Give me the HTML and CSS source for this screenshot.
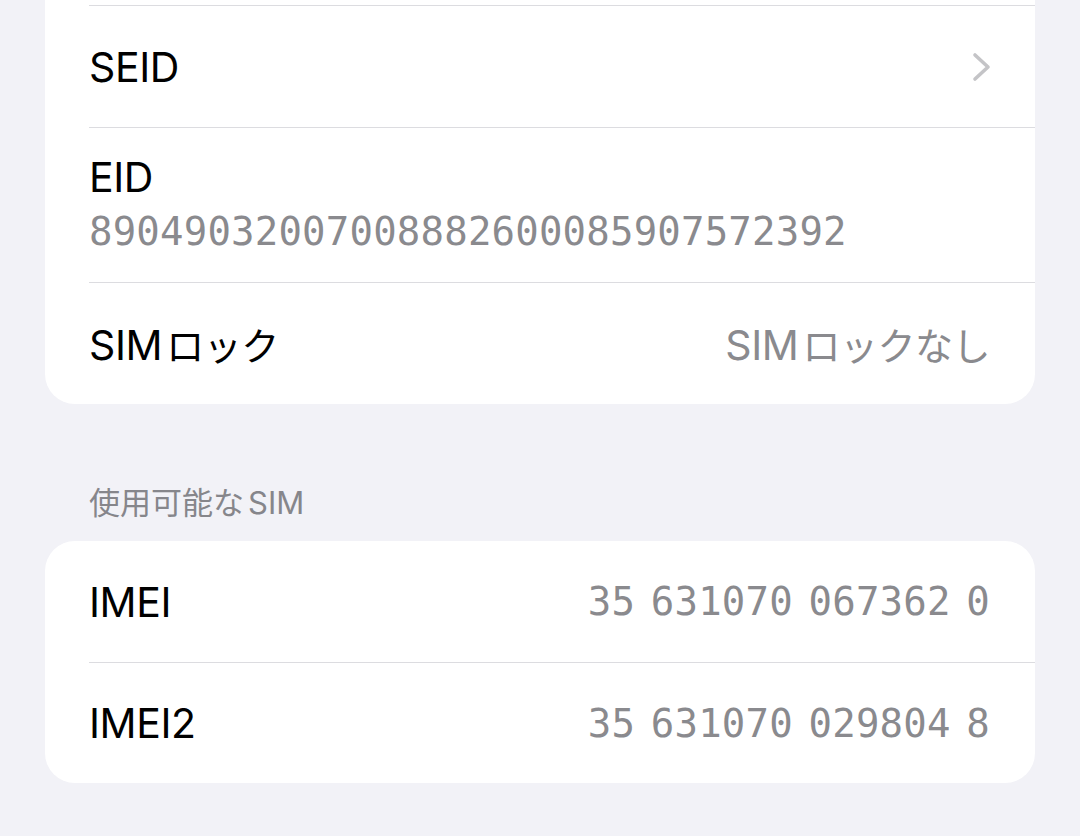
FILE: index.html
```
<!DOCTYPE html>
<html lang="ja">
<head>
    <meta charset="UTF-8">
    <title>情報</title>
    <meta name="viewport" content="width=device-width, initial-scale=1.0">
    <link rel="stylesheet" href="styles.css">
</head>
<body>
    <div class="page">
        <div class="group group-first">
            <div class="row row-cut"></div>
            <div class="row">
                <span class="label">SEID</span>
                <svg class="chevron" width="20" height="30" viewBox="0 0 20 30">
                    <path d="M3 3 L16 15 L3 27" fill="none" stroke="#c4c4c7" stroke-width="3.6" stroke-linecap="round" stroke-linejoin="round"/>
                </svg>
            </div>
            <div class="row row-tall">
                <div class="stack">
                    <span class="label">EID</span>
                    <span class="sub mono">89049032007008882600085907572392</span>
                </div>
            </div>
            <div class="row">
                <span class="label">SIM<span class="jp">ロック</span></span>
                <span class="value">SIM<span class="jp">ロックなし</span></span>
            </div>
        </div>

        <h2 class="section-title">使用可能な<span class="latin">SIM</span></h2>

        <div class="group">
            <div class="row row-short">
                <span class="label">IMEI</span>
                <span class="value mono">35 631070 067362 0</span>
            </div>
            <div class="row row-short">
                <span class="label">IMEI2</span>
                <span class="value mono">35 631070 029804 8</span>
            </div>
        </div>
    </div>
</body>
</html>
```
FILE: styles.css
```
*{
    margin: 0;
    padding: 0;
    box-sizing: border-box;
}
body{
    background: #f2f2f7;
    font-family: "Inter", "Noto Sans CJK JP", sans-serif;
    color: #000;
    overflow: hidden;
}
.page{
    padding: 0 45px;
}
.group{
    background: #fff;
    border-radius: 30px;
    padding-left: 44px;
}
.group-first{
    margin-top: -95px;
}
.row{
    display: flex;
    align-items: center;
    justify-content: space-between;
    height: 122px;
    padding-right: 45px;
    border-top: 1px solid #dcdce0;
}
.row:first-child{
    border-top: none;
}
.row-cut{
    height: 100px;
}
.row-tall{
    height: 155px;
}
.row-short{
    height: 121px;
}
.label{
    font-size: 41px;
    letter-spacing: -0.4px;
}
.value{
    font-size: 41px;
    letter-spacing: -0.4px;
    color: #8a8a8e;
}
.jp{
    font-size: 38px;
    letter-spacing: -0.5px;
    margin-left: 4px;
}
.stack{
    display: flex;
    flex-direction: column;
}
.stack .label{
    line-height: 54px;
}
.sub{
    line-height: 56px;
    color: #8a8a8e;
}
.mono{
    font-family: "DejaVu Sans Mono", monospace;
    font-size: 39px;
    letter-spacing: 0.2px;
    word-spacing: -8px;
}
.chevron{
    display: block;
    margin-right: -2px;
}
.section-title{
    font-size: 31px;
    font-weight: normal;
    line-height: 40px;
    color: #86868b;
    padding-left: 44px;
    margin: 79px 0 18px;
}
.latin{
    margin-left: 4px;
}
```
